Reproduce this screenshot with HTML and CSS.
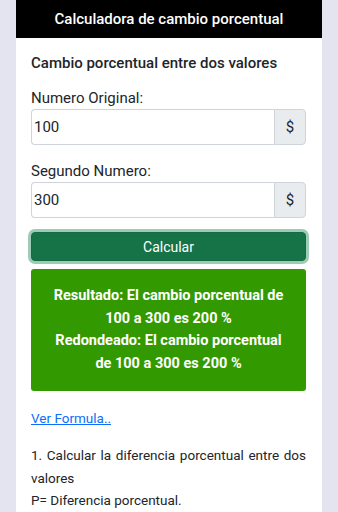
FILE: index.html
```html
<!DOCTYPE html>
<html lang="es">
<head>
<meta charset="utf-8">
<title>Calculadora de cambio porcentual</title>
<link rel="stylesheet" href="styles.css">
</head>
<body>
<div class="page">
  <header class="topbar">Calculadora de cambio porcentual</header>
  <main class="card">
    <h2 class="subtitle">Cambio porcentual entre dos valores</h2>
    <div class="field">
      <label class="label">Numero Original:</label>
      <div class="group">
        <input class="input" type="text" value="100">
        <span class="addon">$</span>
      </div>
    </div>
    <div class="field field-last">
      <label class="label">Segundo Numero:</label>
      <div class="group">
        <input class="input" type="text" value="300">
        <span class="addon">$</span>
      </div>
    </div>
    <button class="btn" type="button">Calcular</button>
    <div class="result">
      Resultado: El cambio porcentual de 100 a 300 es 200 %<br>
      Redondeado: El cambio porcentual de 100 a 300 es 200 %
    </div>
    <a class="link" href="#">Ver Formula..</a>
    <p class="text">1. Calcular la diferencia porcentual entre dos valores<br>P= Diferencia porcentual.</p>
  </main>
</div>
</body>
</html>
```
FILE: styles.css
```css
* { box-sizing: border-box; }
html, body { margin: 0; padding: 0; }
body {
  background: #e4e4f0;
  font-family: Roboto, "Noto Sans", sans-serif;
  color: #212529;
}
.page {
  margin: 0 16px;
  background: #fff;
  min-height: 512px;
}
.topbar {
  background: #000;
  color: #fff;
  height: 38px;
  display: flex;
  align-items: center;
  justify-content: center;
  font-size: 15px;
  font-weight: 500;
}
.card {
  padding: 15px 16px 0 15px;
}
.subtitle {
  margin: 0 0 15px;
  font-size: 15px;
  font-weight: 500;
  line-height: 20px;
}
.field { margin-bottom: 16px; }
.field-last { margin-bottom: 14px; }
.label {
  display: block;
  font-size: 15px;
  line-height: 20px;
  margin-bottom: 1px;
}
.group {
  display: flex;
  height: 36px;
}
.input {
  flex: 1;
  min-width: 0;
  border: 1px solid #ced4da;
  border-right: none;
  border-radius: 4px 0 0 4px;
  padding: 0 2px;
  font-family: inherit;
  font-size: 15px;
  color: #212529;
  background: #fff;
  outline: none;
}
.addon {
  width: 32px;
  display: flex;
  align-items: center;
  justify-content: center;
  background: #e9ecef;
  border: 1px solid #ced4da;
  border-radius: 0 4px 4px 0;
  font-size: 15px;
}
.btn {
  display: block;
  width: 100%;
  height: 29px;
  margin: 0;
  border: 1px solid #146c43;
  border-radius: 4px;
  background: #157347;
  color: #fff;
  font-family: inherit;
  font-size: 14px;
  box-shadow: 0 0 0 3px rgba(60,153,110,.5);
}
.result {
  margin-top: 8px;
  background: #339900;
  color: #fff;
  border-radius: 3px;
  text-align: center;
  font-weight: 700;
  font-size: 14.5px;
  line-height: 22.5px;
  padding: 16px 17px;
}
.link {
  display: inline-block;
  margin-top: 17px;
  color: #0d6efd;
  font-size: 13.5px;
  line-height: 20px;
}
.text {
  margin: 16px 0 0;
  text-align: justify;
  font-size: 13.5px;
  line-height: 22.5px;
}
```
